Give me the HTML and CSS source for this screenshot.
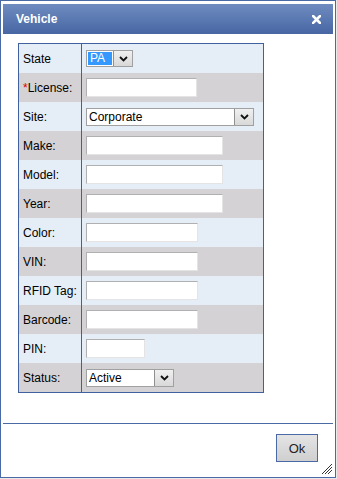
FILE: index.html
```html
<!DOCTYPE html>
<html>
<head>
<meta charset="utf-8">
<link rel="stylesheet" href="styles.css">
</head>
<body>
<div class="dialog">
  <div class="titlebar">
    <span class="title">Vehicle</span>
    <svg class="close" width="9" height="9" viewBox="0 0 9 9"><path d="M1 1 L8 8 M8 1 L1 8" stroke="#fff" stroke-width="2.6" stroke-linecap="square"/></svg>
  </div>
  <div class="content">
    <table class="form">
      <tr class="blue"><td class="lbl">State</td><td><div class="sel state"><span class="val hl">PA</span><span class="arrow"><svg width="9" height="6" viewBox="0 0 9 6"><path d="M1 1 L4.5 4.5 L8 1" fill="none" stroke="#111" stroke-width="1.8"/></svg></span></div></td></tr>
      <tr class="gray"><td class="lbl"><span class="req">*</span>License:</td><td><div class="inp w111"></div></td></tr>
      <tr class="blue"><td class="lbl">Site:</td><td><div class="sel site"><span class="val">Corporate</span><span class="arrow"><svg width="9" height="6" viewBox="0 0 9 6"><path d="M1 1 L4.5 4.5 L8 1" fill="none" stroke="#111" stroke-width="1.8"/></svg></span></div></td></tr>
      <tr class="gray"><td class="lbl">Make:</td><td><div class="inp w137"></div></td></tr>
      <tr class="blue"><td class="lbl">Model:</td><td><div class="inp w137"></div></td></tr>
      <tr class="gray"><td class="lbl">Year:</td><td><div class="inp w137"></div></td></tr>
      <tr class="blue"><td class="lbl">Color:</td><td><div class="inp w112"></div></td></tr>
      <tr class="gray"><td class="lbl">VIN:</td><td><div class="inp w112"></div></td></tr>
      <tr class="blue"><td class="lbl">RFID Tag:</td><td><div class="inp w112"></div></td></tr>
      <tr class="gray"><td class="lbl">Barcode:</td><td><div class="inp w112"></div></td></tr>
      <tr class="blue"><td class="lbl">PIN:</td><td><div class="inp w59"></div></td></tr>
      <tr class="gray"><td class="lbl">Status:</td><td><div class="sel status"><span class="val">Active</span><span class="arrow"><svg width="9" height="6" viewBox="0 0 9 6"><path d="M1 1 L4.5 4.5 L8 1" fill="none" stroke="#111" stroke-width="1.8"/></svg></span></div></td></tr>
    </table>
  </div>
  <div class="buttons">
    <button class="ok">Ok</button>
  </div>
  <svg class="grip" width="12" height="12" viewBox="0 0 12 12"><path d="M11 1 L1 11 M11 4 L4 11 M11 7 L7 11" stroke="#333" stroke-width="1"/></svg>
</div>
</body>
</html>
```
FILE: styles.css
```css
html, body {
  margin: 0;
  padding: 0;
  background: #e9e9e9;
}
body {
  font-family: "Liberation Sans", Arial, sans-serif;
  font-size: 12px;
  color: #000;
}
.dialog {
  position: relative;
  box-sizing: border-box;
  width: 336px;
  height: 478px;
  background: #fff;
  border: 1px solid #4a6aa6;
  padding: 3px 2px 0 2px;
  display: flex;
  flex-direction: column;
}
.titlebar {
  height: 30px;
  flex: none;
  background: linear-gradient(#6f8cc0, #4766a3);
  display: flex;
  align-items: center;
  justify-content: space-between;
  padding: 0 12px 0 13px;
}
.title {
  color: #fff;
  font-weight: bold;
  font-size: 12px;
}
.close {
  display: block;
  margin-top: 1px;
}
.content {
  height: 390px;
  flex: none;
  box-sizing: border-box;
  padding: 9px 0 0 15px;
  border-bottom: 1px solid #4a6aa6;
}
.form {
  border-collapse: collapse;
  border: 1px solid #4060a0;
  width: 246px;
}
.form td {
  height: 29px;
  padding: 0;
  vertical-align: middle;
}
.form td.lbl {
  width: 58px;
  padding-left: 4px;
  border-right: 1px solid #4060a0;
  white-space: nowrap;
}
.form td + td {
  padding-left: 4px;
}
.blue td { background: #e5edf7; }
.gray td { background: #d5d2d5; }
.req { color: #d00; }
.inp {
  box-sizing: border-box;
  height: 19px;
  background: #fff;
  border: 1px solid;
  border-color: #b0b0b0 #e4e4e4 #e4e4e4 #b0b0b0;
}
.w111 { width: 111px; }
.w112 { width: 112px; }
.w137 { width: 137px; }
.w59 { width: 59px; }
.sel {
  box-sizing: border-box;
  height: 18px;
  background: #fff;
  border: 1px solid #a0a0a0;
  display: flex;
  align-items: stretch;
}
.sel.state { height: 17px; }
.sel .val {
  flex: 1;
  line-height: 16px;
  padding-left: 2px;
}
.sel .val.hl {
  background: #3399ff;
  color: #fff;
  margin: 1px;
  line-height: 13px;
  padding-left: 2px;
}
.sel .arrow {
  width: 18px;
  flex: none;
  border-left: 1px solid #909090;
  background: linear-gradient(#f0f0f0, #d8d8d8);
  display: flex;
  align-items: center;
  justify-content: center;
}
.state { width: 47px; }
.site { width: 168px; }
.status { width: 88px; }
.buttons {
  display: flex;
  justify-content: flex-end;
  padding: 10px 15px 0 0;
}
.ok {
  width: 42px;
  height: 28px;
  box-sizing: border-box;
  border: 1px solid #4a6aa6;
  background: linear-gradient(#e4e4e4, #cfcfcf);
  font-family: "Liberation Sans", Arial, sans-serif;
  font-size: 13px;
  color: #222;
  padding: 0;
}
.grip {
  position: absolute;
  right: 2px;
  bottom: 2px;
}
```
